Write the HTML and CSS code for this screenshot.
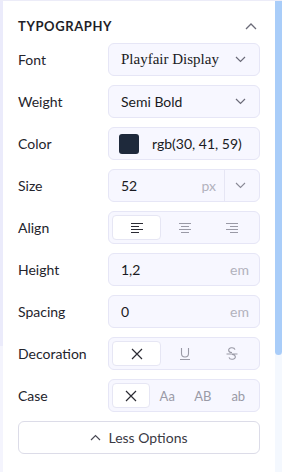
FILE: index.html
```html
<!DOCTYPE html>
<html lang="en">
<head>
	<meta charset="UTF-8">
	<title>Typography</title>
	<link rel="stylesheet" href="styles.css">
</head>
<body>
<div class="frame">
	<div class="edge"></div>
	<div class="panel">
		<div class="panel-head">
			<span class="panel-title">Typography</span>
			<svg class="chev" width="12" height="8" viewBox="0 0 12 8"><path d="M1 7 L6 2 L11 7" fill="none" stroke="#6b6b78" stroke-width="1.3"/></svg>
		</div>

		<div class="row">
			<span class="label">Font</span>
			<div class="field">
				<span class="value serif">Playfair Display</span>
				<svg class="down" width="11" height="7" viewBox="0 0 11 7"><path d="M1 1 L5.5 5.5 L10 1" fill="none" stroke="#6b6b78" stroke-width="1.2"/></svg>
			</div>
		</div>

		<div class="row">
			<span class="label">Weight</span>
			<div class="field">
				<span class="value">Semi Bold</span>
				<svg class="down" width="11" height="7" viewBox="0 0 11 7"><path d="M1 1 L5.5 5.5 L10 1" fill="none" stroke="#6b6b78" stroke-width="1.2"/></svg>
			</div>
		</div>

		<div class="row">
			<span class="label">Color</span>
			<div class="field">
				<span class="swatch"></span>
				<span class="value">rgb(30, 41, 59)</span>
			</div>
		</div>

		<div class="row">
			<span class="label">Size</span>
			<div class="field split">
				<span class="value">52</span>
				<span class="unit">px</span>
				<span class="divider"></span>
				<svg class="down" width="11" height="7" viewBox="0 0 11 7"><path d="M1 1 L5.5 5.5 L10 1" fill="none" stroke="#8a8a96" stroke-width="1.1"/></svg>
			</div>
		</div>

		<div class="row">
			<span class="label">Align</span>
			<div class="segments">
				<span class="seg active">
					<svg width="14" height="12" viewBox="0 0 14 12"><path d="M1 1.5H13M1 4.5H9M1 7.5H13M1 10.5H9" stroke="#2b2b33" stroke-width="1.1"/></svg>
				</span>
				<span class="seg">
					<svg width="14" height="12" viewBox="0 0 14 12"><path d="M1 1.5H13M3 4.5H11M1 7.5H13M3 10.5H11" stroke="#9a9aa6" stroke-width="1.1"/></svg>
				</span>
				<span class="seg">
					<svg width="14" height="12" viewBox="0 0 14 12"><path d="M1 1.5H13M5 4.5H13M1 7.5H13M5 10.5H13" stroke="#9a9aa6" stroke-width="1.1"/></svg>
				</span>
			</div>
		</div>

		<div class="row">
			<span class="label">Height</span>
			<div class="field">
				<span class="value">1,2</span>
				<span class="unit end">em</span>
			</div>
		</div>

		<div class="row">
			<span class="label">Spacing</span>
			<div class="field">
				<span class="value">0</span>
				<span class="unit end">em</span>
			</div>
		</div>

		<div class="row">
			<span class="label">Decoration</span>
			<div class="segments">
				<span class="seg active">
					<svg width="12" height="12" viewBox="0 0 12 12"><path d="M1 1L11 11M11 1L1 11" stroke="#2b2b33" stroke-width="1.2"/></svg>
				</span>
				<span class="seg">
					<svg width="12" height="14" viewBox="0 0 12 14"><path d="M2.5 1V6.5A3.5 3.5 0 0 0 9.5 6.5V1M1 12.5H11" fill="none" stroke="#9a9aa6" stroke-width="1.1"/></svg>
				</span>
				<span class="seg">
					<svg width="12" height="14" viewBox="0 0 12 14"><path d="M9 2.6A3.2 2.4 0 1 0 6 5.5M3 10.4A3.2 2.4 0 1 0 6 7.5M0.5 7H11.5" fill="none" stroke="#9a9aa6" stroke-width="1.1"/></svg>
				</span>
			</div>
		</div>

		<div class="row">
			<span class="label">Case</span>
			<div class="segments four">
				<span class="seg active">
					<svg width="12" height="12" viewBox="0 0 12 12"><path d="M1 1L11 11M11 1L1 11" stroke="#2b2b33" stroke-width="1.2"/></svg>
				</span>
				<span class="seg txt">Aa</span>
				<span class="seg txt">AB</span>
				<span class="seg txt">ab</span>
			</div>
		</div>

		<button class="less">
			<svg width="11" height="7" viewBox="0 0 11 7"><path d="M1 6 L5.5 1.5 L10 6" fill="none" stroke="#4a4a55" stroke-width="1.2"/></svg>
			Less Options
		</button>
	</div>
	<div class="scroll">
		<div class="thumb"></div>
	</div>
</div>
</body>
</html>
```

FILE: styles.css
```css
* {
	margin: 0;
	padding: 0;
	box-sizing: border-box;
}

body {
	background: #ffffff;
	font-family: Lato, "Open Sans", sans-serif;
	color: #1e1e26;
}

.frame {
	display: flex;
	width: 282px;
	height: 472px;
	border-top: 1px solid #ececf8;
}

.edge {
	width: 3px;
	background: linear-gradient(#ebebfb 0, #ebebfb 345px, #f4f4fd 345px);
}

.panel {
	flex: 1;
	padding: 0 15px 0 15px;
}

.panel-head {
	display: flex;
	align-items: center;
	justify-content: space-between;
	height: 42px;
	padding-top: 8px;
	padding-right: 3px;
}

.panel-title {
	text-transform: uppercase;
	font-weight: 700;
	font-size: 13px;
	letter-spacing: 0.6px;
	color: #1f1f28;
}

.row {
	display: flex;
	align-items: center;
	height: 33px;
	margin-bottom: 9px;
}

.label {
	width: 90px;
	font-size: 14px;
	color: #24242c;
}

.field {
	display: flex;
	align-items: center;
	width: 152px;
	height: 33px;
	padding: 0 12px 0 12px;
	background: #f7f7ff;
	border: 1px solid #e6e6f6;
	border-radius: 6px;
}

.value {
	flex: 1;
	font-size: 14px;
	color: #1a1a22;
}

.serif {
	font-family: "Liberation Serif", "DejaVu Serif", serif;
	font-size: 15px;
}

.down {
	margin-right: 1px;
}

.swatch {
	width: 20px;
	height: 20px;
	margin: 0 13px 0 -2px;
	background: rgb(30, 41, 59);
	border-radius: 3px;
}

.unit {
	font-size: 14px;
	color: #b2b2bd;
}

.unit.end {
	margin-right: -2px;
}

.split .divider {
	width: 1px;
	align-self: stretch;
	margin: 0 10px 0 8px;
	background: #e6e6f4;
}

.segments {
	display: flex;
	width: 152px;
	height: 33px;
	padding: 3px;
	background: #f7f7ff;
	border: 1px solid #e6e6f6;
	border-radius: 6px;
}

.seg {
	flex: 1;
	display: flex;
	align-items: center;
	justify-content: center;
	border-radius: 4px;
}

.seg.active {
	background: #ffffff;
	border: 1px solid #e6e6f4;
}

.seg.txt {
	font-size: 13px;
	color: #9a9aa6;
}

.less {
	display: flex;
	align-items: center;
	justify-content: center;
	gap: 7px;
	width: 242px;
	height: 33px;
	background: #ffffff;
	border: 1px solid #dcdce8;
	border-radius: 6px;
	font-family: Lato, "Open Sans", sans-serif;
	font-size: 14px;
	color: #3a3a44;
}

.scroll {
	width: 7px;
	background: #f4f8fe;
}

.thumb {
	height: 354px;
	background: #a9cdf9;
	border-radius: 0 0 4px 4px;
}
```
